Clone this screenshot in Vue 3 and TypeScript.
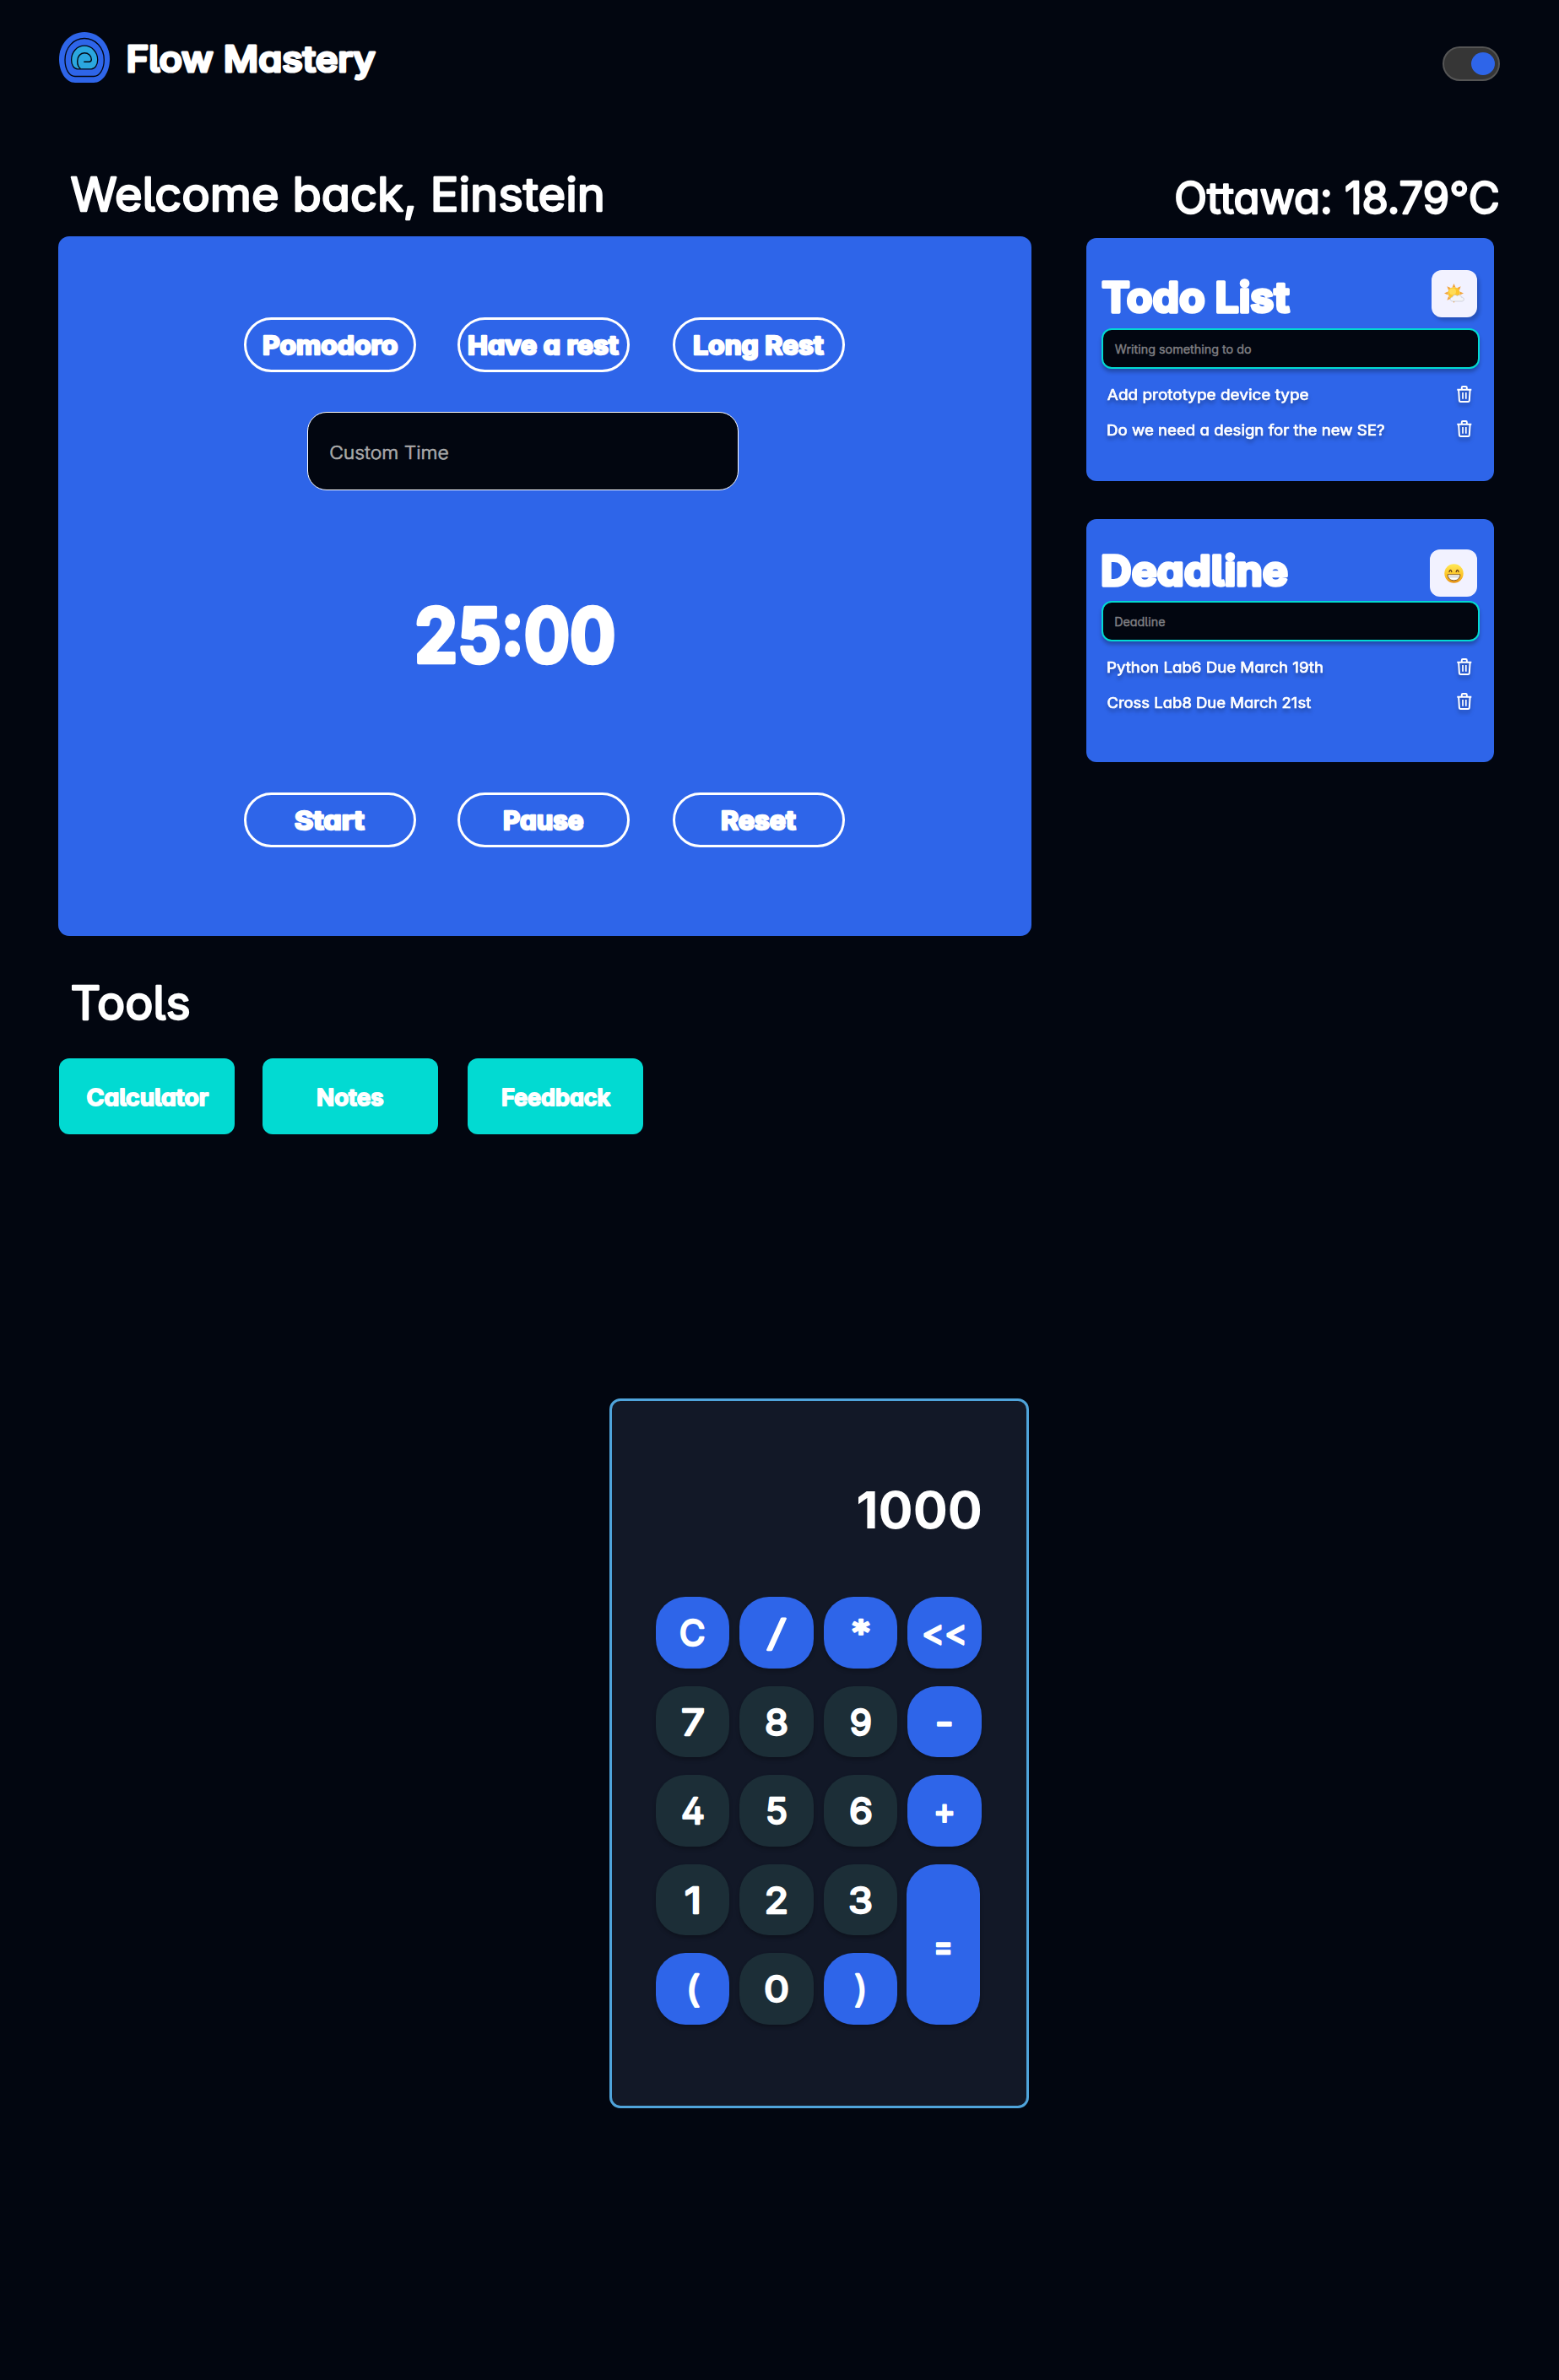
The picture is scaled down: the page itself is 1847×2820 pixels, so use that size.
<script setup lang="ts">
import { h, type FunctionalComponent } from 'vue'

interface LabelProps {
  text: string
  w: number
  cap: number
  s?: number
  weight?: number
}

// Side bearing of a glyph, as a share of the font size
const bearing = (c: string) => (/[WTAyt"]/.test(c) ? 0.03 : /[CO29oe?)sw]/.test(c) ? 0.055 : 0.075)

// Rounded lettering: stroked text fitted to a box of the given width and cap height
const Label: FunctionalComponent<LabelProps> = (p) => {
  const s = p.s ?? 2
  const size = (p.cap - s) / 0.727
  const left = bearing(p.text[0]) * size
  const right = bearing(p.text[p.text.length - 1]) * size
  return h(
    'svg',
    { class: 'label', width: p.w, height: p.cap, style: { display: 'block', overflow: 'visible', flex: 'none' } },
    h(
      'text',
      {
        x: s / 2 - left,
        y: p.cap - s / 2,
        textLength: p.w - s + left + right,
        lengthAdjust: 'spacingAndGlyphs',
        fill: 'currentColor',
        stroke: 'currentColor',
        'stroke-width': s,
        'stroke-linejoin': 'round',
        style: {
          fontFamily: 'Inter, sans-serif',
          fontSize: size + 'px',
          fontWeight: p.weight ?? 400,
          fontOpticalSizing: 'none',
          fontFeatureSettings: '"cv11", "cv02", "cv05"',
        },
      },
      p.text,
    ),
  )
}
Label.props = ['text', 'w', 'cap', 's', 'weight']

const modes = [
  { text: 'Pomodoro', w: 159 },
  { text: 'Have a rest', w: 178 },
  { text: 'Long Rest', w: 154 },
]
const actions = [
  { text: 'Start', w: 82 },
  { text: 'Pause', w: 94 },
  { text: 'Reset', w: 88 },
]
const tools = [
  { text: 'Calculator', w: 143 },
  { text: 'Notes', w: 78 },
  { text: 'Feedback', w: 127 },
]
const lists = [
  {
    id: 'todo',
    title: 'Todo List',
    titleW: 223,
    hint: 'Writing something to do',
    hintW: 161,
    items: [
      { text: 'Add prototype device type', w: 238 },
      { text: 'Do we need a design for the new SE?', w: 328 },
    ],
  },
  {
    id: 'deadline',
    title: 'Deadline',
    titleW: 219,
    hint: 'Deadline',
    hintW: 59,
    items: [
      { text: 'Python Lab6 Due March 19th', w: 255 },
      { text: 'Cross Lab8 Due March 21st', w: 241 },
    ],
  },
]
const keys = [
  { text: 'C', op: true, w: 28.5 },
  { text: '/', op: true, w: 20, weight: 250 },
  { text: '*', op: true, w: 20 },
  { text: '<<', op: true, w: 50 },
  { text: '7', w: 24 },
  { text: '8', w: 24 },
  { text: '9', w: 24 },
  { text: '-', op: true, w: 17.5 },
  { text: '4', w: 24 },
  { text: '5', w: 22 },
  { text: '6', w: 24 },
  { text: '+', op: true, w: 22 },
  { text: '1', w: 16 },
  { text: '2', w: 26 },
  { text: '3', w: 25 },
  { text: '=', op: true, tall: true, w: 19 },
  { text: '(', op: true, w: 14, weight: 300 },
  { text: '0', w: 26 },
  { text: ')', op: true, w: 14, weight: 300 },
]
const rays = [0, 45, 90, 135, 180, 225, 270, 315]
</script>

<template>
  <div class="page">
    <header>
      <div class="brand">
        <svg width="60" height="60" viewBox="0 0 60 60" fill="none">
          <path d="M0 32C0 14 13 0 30 0S60 14 60 32C60 47 52 60 41 60H19C8 60 0 47 0 32Z" fill="#2e65e9" />
          <path d="M19 52.5H41C48 52.5 53.3 44 53.3 33C53.3 18.500 43 7.500 30 7.500S7 18.500 7 33C7 44 12 52.500 19 52.500Z" stroke="#020610" stroke-width="1.300" />
          <path d="M22 43.800C17.500 43.800 14.600 39 14.600 33C14.600 23.500 21.500 16.200 30 16.200S45.700 23.500 45.700 33C45.700 39 42.500 43.800 38 43.800Z" fill="#2ba7df" stroke="#020610" stroke-width="1.300" />
          <path d="M25.500 43.500C22.800 41.500 21.700 38.500 21.700 34.500C21.700 28.800 25.200 24.700 30 24.700C34.800 24.700 38.300 28 38.300 32.500C38.300 34.200 37.300 35.200 35.500 35.200H29.300" stroke="#020610" stroke-width="1.400" />
        </svg>
        <Label text="Flow Mastery" :w="294" :cap="34" :s="3.200" :weight="550" />
      </div>
      <div class="toggle"><i></i></div>
    </header>

    <main>
      <section class="left">
        <Label class="welcome" text="Welcome back, Einstein" :w="630" :cap="42" :s="2.300" :weight="400" />
        <div class="timer">
          <div class="pills">
            <button v-for="m in modes" :key="m.text"><Label :text="m.text" :w="m.w" :cap="24.500" :s="2.500" :weight="650" /></button>
          </div>
          <div class="custom"><Label text="Custom Time" :w="140" :cap="16.500" :s="0.700" :weight="350" /></div>
          <Label class="clock" text="25:00" :w="231" :cap="69" :s="4.500" :weight="700" />
          <div class="pills">
            <button v-for="a in actions" :key="a.text"><Label :text="a.text" :w="a.w" :cap="24.500" :s="2.500" :weight="650" /></button>
          </div>
        </div>
        <Label class="tools-title" text="Tools" :w="140" :cap="42" :s="2.300" :weight="400" />
        <nav>
          <button v-for="t in tools" :key="t.text"><Label :text="t.text" :w="t.w" :cap="21.500" :s="2" :weight="600" /></button>
        </nav>
      </section>

      <aside>
        <Label class="weather" text="Ottawa: 18.79°C" :w="382" :cap="40" :s="2.300" :weight="400" />
        <article v-for="l in lists" :key="l.id" :class="l.id">
          <div class="head">
            <Label class="title" :text="l.title" :w="l.titleW" :cap="39.500" :s="3.500" :weight="720" />
            <div class="mood">
              <svg v-if="l.id === 'todo'" width="24" height="24" viewBox="0 0 24 24">
                <path v-for="r in rays" :key="r" d="M11.500 0L13.500 4.500H9.500Z" fill="#f2a33a" :transform="`rotate(${r} 11.5 11.5)`" />
                <circle cx="11.500" cy="11.300" r="7" fill="#fcc52c" />
                <circle cx="10" cy="9.500" r="4" fill="#ffdc55" />
                <path d="M10 21C6.500 21 6 16.500 9.800 16C10.300 13.500 13.500 12.500 15.200 14.600C18 12.500 20.500 14.200 20.300 16.200C24 16 24.500 20.500 21 21Z" fill="#f3f4f8" stroke="#b9bdc9" stroke-width=".6" />
              </svg>
              <svg v-else width="23" height="23" viewBox="0 0 23 23">
                <defs>
                  <linearGradient id="face" x1="0" y1="0" x2="0" y2="1">
                    <stop offset="0" stop-color="#ffe957" />
                    <stop offset=".6" stop-color="#fdc326" />
                    <stop offset="1" stop-color="#e99215" />
                  </linearGradient>
                </defs>
                <circle cx="11.500" cy="11.500" r="11.200" fill="url(#face)" />
                <path d="M6 9.500C6.400 6.800 8.400 6.800 8.800 9.500M14.200 9.500C14.600 6.800 16.600 6.800 17 9.500" fill="none" stroke="#6b3d13" stroke-width="1.300" stroke-linecap="round" />
                <path d="M4 12.800H19C18.600 17.500 15.500 19.800 11.500 19.800S4.400 17.500 4 12.800Z" fill="#fff" stroke="#6f471b" stroke-width=".9" />
                <path d="M4.600 15.700H18.400" stroke="#8d8d92" stroke-width=".6" />
              </svg>
            </div>
          </div>
          <div class="field"><Label :text="l.hint" :w="l.hintW" :cap="10.500" :s="0.400" :weight="400" /></div>
          <ul>
            <li v-for="i in l.items" :key="i.text">
              <Label :text="i.text" :w="i.w" :cap="13.500" :s="0.700" :weight="430" />
              <svg width="18" height="20" viewBox="0 0 18 20" fill="none" stroke="#fff" stroke-width="2" stroke-linejoin="round">
                <path d="M.3 4.800H17.300M5.800 4.500V2.300Q5.800 1 7 1H10.600Q11.800 1 11.800 2.300V4.500" />
                <path d="M2.100 4.800L2.900 17.600Q3 19 4.500 19H13.200Q14.700 19 14.800 17.600L15.600 4.800" />
                <path d="M7 8V15.800M10.800 8V15.800" stroke-width="1.700" />
              </svg>
            </li>
          </ul>
        </article>
      </aside>
    </main>

    <section class="calc">
      <output>1000</output>
      <div class="keys">
        <button v-for="k in keys" :key="k.text" :class="{ op: k.op, tall: k.tall }">
          <Label :text="k.text" :w="k.w" :cap="33.500" :s="2.400" :weight="k.weight ?? 410" />
        </button>
      </div>
    </section>
  </div>
</template>

<style>
body {
  margin: 0;
  background: #020610;
}
</style>

<style scoped>
.page {
  box-sizing: border-box;
  width: 1847px;
  height: 2820px;
  background: #020610;
  color: #fff;
  font-family: Inter, sans-serif;
  overflow: hidden;
}
button {
  font: inherit;
  color: inherit;
  margin: 0;
  padding: 0;
  border: 0;
  display: flex;
  align-items: center;
  justify-content: center;
}
header {
  height: 170px;
  padding: 38px 70px 0;
  box-sizing: border-box;
  display: flex;
  justify-content: space-between;
}
.brand {
  display: flex;
  gap: 21px;
  height: 60px;
}
.brand .label {
  margin-top: 15px;
}
.toggle {
  box-sizing: border-box;
  width: 68px;
  height: 41px;
  margin-top: 17px;
  padding-right: 4px;
  border: 2px solid #555;
  border-radius: 21px;
  background: #363636;
  display: flex;
  align-items: center;
  justify-content: flex-end;
}
.toggle i {
  width: 28px;
  height: 27px;
  border-radius: 50%;
  background: #2e65e9;
}
main {
  display: flex;
  height: 1487px;
}
.left {
  width: 1153px;
  margin-left: 68.500px;
}
.welcome {
  margin: 39px 0 29px 15.500px;
}
.timer {
  box-sizing: border-box;
  height: 828.500px;
  padding-top: 96px;
  border-radius: 13px;
  background: #2e65e9;
}
.pills {
  display: flex;
  gap: 50px;
  margin-left: 220.500px;
}
.pills button {
  box-sizing: border-box;
  width: 204px;
  height: 65px;
  padding-top: 2px;
  border: 3px solid #fff;
  border-radius: 33px;
  background: transparent;
}
.pills button:nth-child(2) {
  margin: 0 1px 0 -1px;
}
.custom {
  box-sizing: border-box;
  width: 511px;
  height: 93px;
  margin: 47px 0 0 295.500px;
  padding: 4px 0 0 26px;
  border: 1px solid #fff;
  border-radius: 23px;
  background: #020610;
  color: #a9a9a9;
  display: flex;
  align-items: center;
}
.clock {
  margin: 136.500px 0 152.500px 425.500px;
}
.tools-title {
  margin: 58.500px 0 44.500px 15.500px;
}
nav {
  display: flex;
  gap: 34px;
  margin-left: 1.500px;
}
nav button {
  width: 208px;
  height: 90px;
  padding-top: 2px;
  box-sizing: border-box;
  border-radius: 12px;
  background: #02dad2;
}
nav button:nth-child(2) {
  margin: 0 1px 0 -1px;
}
aside {
  width: 490px;
  margin-left: 65.500px;
}
.weather {
  margin: 44px 0 28px 106px;
}
article {
  box-sizing: border-box;
  width: 483px;
  height: 288px;
  padding: 38px 17px 0 18px;
  border-radius: 12px;
  background: #2e65e9;
}
article + article {
  margin-top: 45px;
  padding-top: 36px;
}
.head {
  display: flex;
  justify-content: space-between;
  height: 69px;
}
.deadline .head {
  height: 61px;
}
.title {
  margin-top: 12px;
}
.deadline .title {
  margin: 4.500px 0 0 1px;
}
.mood {
  width: 54px;
  height: 56px;
  margin-right: 3px;
  border-radius: 12px;
  background: #f2f2ff;
  box-shadow: 3px 4px 4px rgba(0, 0, 0, 0.2);
  display: flex;
  align-items: center;
  justify-content: center;
}
.deadline .mood {
  width: 56px;
  box-shadow: none;
}
.field {
  box-sizing: border-box;
  width: 448px;
  height: 48px;
  padding: 2px 0 0 14px;
  border: 2px solid #02dad2;
  border-radius: 12px;
  background: #020610;
  color: #808084;
  display: flex;
  align-items: center;
  box-shadow: 0 4px 4px rgba(0, 0, 0, 0.25);
}
ul {
  list-style: none;
  margin: 20px 0 0;
  padding: 0 9.500px 0 7px;
}
li {
  height: 20px;
  margin-bottom: 21px;
  display: flex;
  justify-content: space-between;
  align-items: center;
  filter: drop-shadow(0 4px 2px rgba(0, 0, 0, 0.25));
}
li .label {
  margin-top: 1px;
}
li + li .label {
  margin-top: 3px;
}
.calc {
  box-sizing: border-box;
  width: 497px;
  height: 841px;
  margin-left: 722px;
  padding: 102px 52px 0;
  border: 3px solid #4fa4db;
  border-radius: 13px;
  background: #121827;
}
output {
  display: block;
  height: 60px;
  margin: -3px 0 73px;
  line-height: 60px;
  font-size: 61px;
  font-weight: 700;
  font-optical-sizing: none;
  text-align: right;
}
.keys {
  display: grid;
  grid-template-columns: repeat(4, 87.300px);
  grid-auto-rows: 84.500px;
  gap: 21px 12.200px;
}
.keys button {
  border-radius: 35px;
  background: #1c2e37;
  box-shadow: 0 3px 4px rgba(0, 0, 0, 0.25);
  padding-top: 1px;
}
.keys .op {
  background: #2e65e9;
}
.keys .tall {
  grid-column: 4;
  grid-row: 4 / span 2;
  margin: 0 1.500px 0 -1.500px;
  padding-top: 4px;
}
</style>
